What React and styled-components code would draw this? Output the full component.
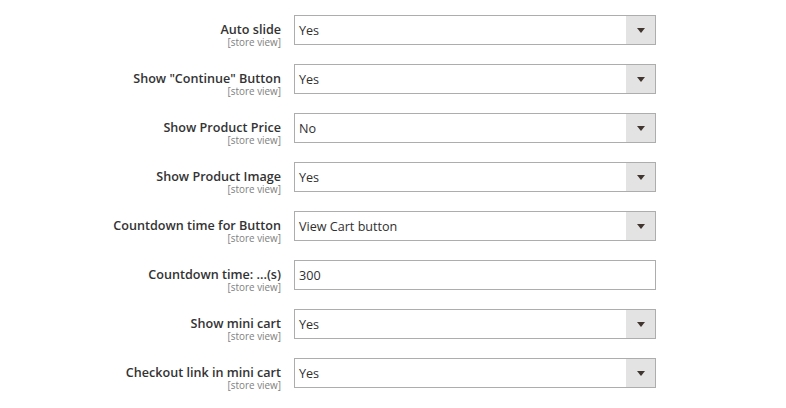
import React from "react";
import styled, { createGlobalStyle } from "styled-components";

const Global = createGlobalStyle`
  html, body { margin: 0; padding: 0; background: #fff; }
  body { font-family: "Open Sans", "Liberation Sans", sans-serif; color: #303030; }
`;

const Form = styled.div`
  display: flex;
  flex-direction: column;
  gap: 19px;
  padding: 15px 0 20px;
`;

const Row = styled.div`
  display: grid;
  grid-template-columns: 281px 362px;
  grid-template-rows: 30px;
  column-gap: 13px;
  align-items: start;
`;

const LabelCol = styled.div`
  display: flex;
  flex-direction: column;
  align-items: flex-end;
  padding-top: 8px;
`;

const Label = styled.span`
  font-size: 12.6px;
  font-weight: 600;
  line-height: 13px;
  color: #333;
  white-space: nowrap;
`;

const Scope = styled.span`
  font-size: 9.9px;
  line-height: 11px;
  color: #808080;
  margin-top: 1px;
  white-space: nowrap;
`;

const Box = styled.div`
  box-sizing: border-box;
  height: 30px;
  border: 1px solid #adadad;
  display: flex;
  align-items: stretch;
  background: #fff;
`;

const Value = styled.div`
  flex: 1;
  display: flex;
  align-items: center;
  padding-left: 4px;
  font-size: 12.6px;
  color: #303030;
`;

const Arrow = styled.div`
  width: 29px;
  background: #e3e3e3;
  display: flex;
  align-items: center;
  justify-content: center;
`;

const Tri = styled.span`
  width: 0;
  height: 0;
  border-left: 4px solid transparent;
  border-right: 4px solid transparent;
  border-top: 5px solid #41362f;
  margin-top: 1px;
`;

const rows = [
  ["Auto slide", "Yes", true],
  ['Show "Continue" Button', "Yes", true],
  ["Show Product Price", "No", true],
  ["Show Product Image", "Yes", true],
  ["Countdown time for Button", "View Cart button", true],
  ["Countdown time: ...(s)", "300", false],
  ["Show mini cart", "Yes", true],
  ["Checkout link in mini cart", "Yes", true],
];

export default function App() {
  return (
    <>
      <Global />
      <Form>
        {rows.map(([label, value, select]) => (
          <Row key={label}>
            <LabelCol>
              <Label>{label}</Label>
              <Scope>[store view]</Scope>
            </LabelCol>
            <Box>
              <Value>{value}</Value>
              {select && (
                <Arrow>
                  <Tri />
                </Arrow>
              )}
            </Box>
          </Row>
        ))}
      </Form>
    </>
  );
}
